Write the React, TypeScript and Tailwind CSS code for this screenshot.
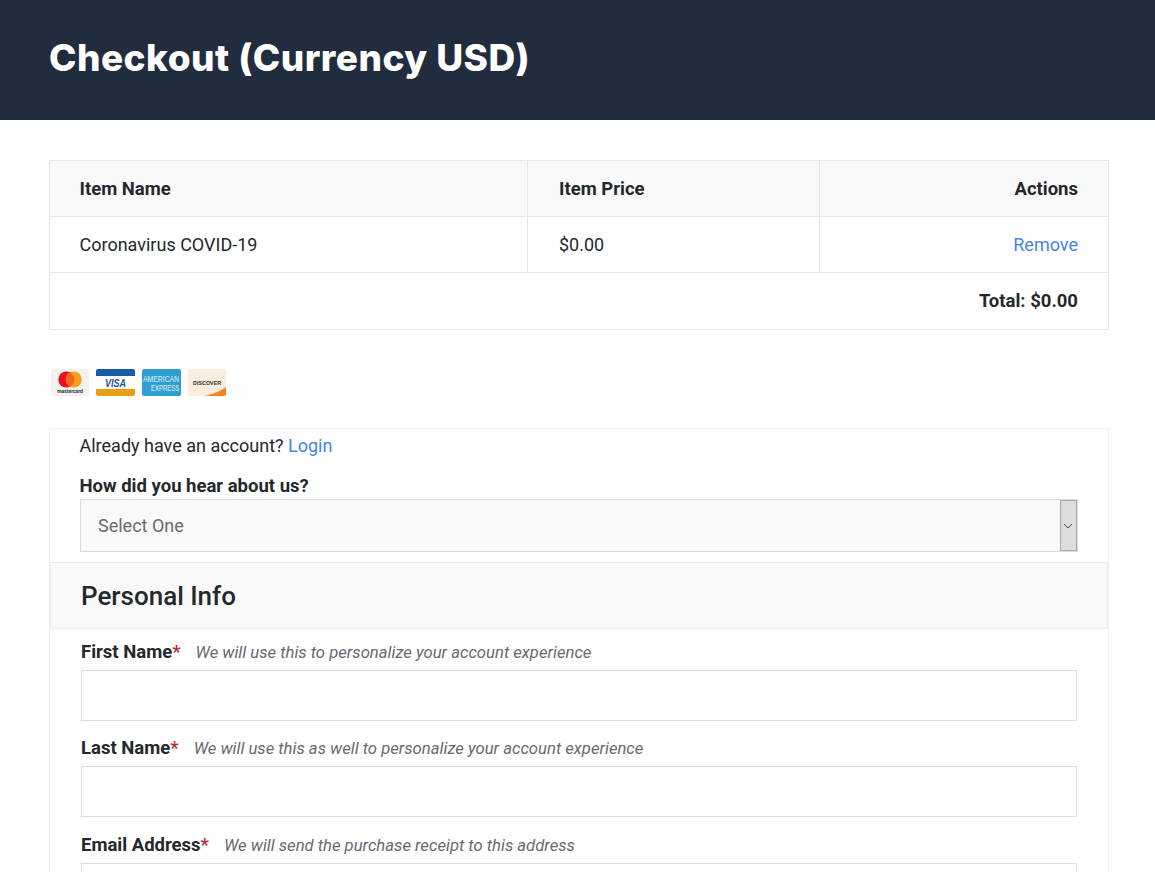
const PaymentIcons = () => (
  <div className="flex items-center gap-[7px] pl-[2px]">
    {/* Mastercard */}
    <svg width="38" height="27" viewBox="0 0 38 27">
      <rect width="38" height="27" rx="2" fill="#f3f2f1" />
      <circle cx="15.3" cy="10.5" r="8" fill="#e8111d" />
      <circle cx="22.7" cy="10.5" r="8" fill="#f79e1b" />
      <path d="M19 3.4a8 8 0 0 1 0 14.2a8 8 0 0 1 0-14.2z" fill="#f4651c" />
      <text x="19" y="23.5" textAnchor="middle" fontSize="5" fontWeight="700" fill="#333" fontFamily="Roboto, sans-serif">mastercard</text>
    </svg>
    {/* Visa */}
    <svg width="39" height="27" viewBox="0 0 39 27">
      <rect width="39" height="27" rx="2" fill="#fff" />
      <path d="M0 7V2a2 2 0 0 1 2-2h35a2 2 0 0 1 2 2v5z" fill="#1a5ca8" />
      <path d="M0 20v5a2 2 0 0 0 2 2h35a2 2 0 0 0 2-2v-5z" fill="#e79f15" />
      <text x="9" y="17.5" fontSize="11" fontWeight="700" fontStyle="italic" fill="#1c4f94" fontFamily="'Liberation Sans', sans-serif" textLength="21" lengthAdjust="spacingAndGlyphs">VISA</text>
    </svg>
    {/* American Express */}
    <svg width="39" height="27" viewBox="0 0 39 27">
      <rect width="39" height="27" rx="2" fill="#2f9fd3" />
      <text transform="translate(1 12.5) scale(0.72 1)" fontSize="9.5" fill="#e4f3fa" fontFamily="'Liberation Sans', sans-serif">AMERICAN</text>
      <text transform="translate(9 22) scale(0.63 1)" fontSize="9.5" fill="#e4f3fa" fontFamily="'Liberation Sans', sans-serif">EXPRESS</text>
    </svg>
    {/* Discover */}
    <svg width="38" height="27" viewBox="0 0 38 27">
      <rect width="38" height="27" rx="2" fill="#fbeee0" />
      <path d="M16 27C26 25 33 22 38 18v7a2 2 0 0 1-2 2z" fill="#f58220" />
      <text x="5" y="15.5" fontSize="5.4" fontWeight="700" fill="#3a2a20" fontFamily="'Liberation Sans', sans-serif">DISCOVER</text>
    </svg>
  </div>
);

const Field = ({ label, hint }: { label: string; hint: string }) => (
  <div>
    <div className="-mt-[1px] flex h-[23px] items-baseline text-[#23282d]">
      <span className="text-[18.5px] font-bold">
        {label}
        <span className="text-[#b5333f]">*</span>
      </span>
      <em className="ml-[15px] text-[16.67px] text-[#666a70]">{hint}</em>
    </div>
    <div className="mt-[8px] h-[51px] border border-[#dcdcdc] bg-white" />
  </div>
);

export default function App() {
  return (
    <div className="h-screen overflow-hidden bg-white font-['Roboto',sans-serif] text-[18px] text-[#23282d]">
      {/* Header */}
      <div className="flex h-[120px] items-center bg-[#222c3f] px-[49px]">
        <h1 className="-mt-[4px] font-['Inter',sans-serif] text-[37px] font-extrabold tracking-[0.46px] text-white">
          Checkout (Currency USD)
        </h1>
      </div>

      <div className="px-[49px] pt-[40px]">
        {/* Cart table */}
        <table className="w-[1060px] table-fixed border-collapse border border-[#e6e6e6]">
          <colgroup>
            <col className="w-[478px]" />
            <col className="w-[292px]" />
            <col />
          </colgroup>
          <tbody>
            <tr className="h-[56px] bg-[#f9f9f9] text-[18.5px] font-bold">
              <td className="border border-[#e6e6e6] pt-[2px] pl-[29.5px]">Item Name</td>
              <td className="border border-[#e6e6e6] pt-[2px] pl-[31px]">Item Price</td>
              <td className="border border-[#e6e6e6] pt-[2px] pr-[30px] text-right">Actions</td>
            </tr>
            <tr className="h-[56px]">
              <td className="border border-[#e6e6e6] pl-[29.5px]">Coronavirus COVID-19</td>
              <td className="border border-[#e6e6e6] pl-[31px]">$0.00</td>
              <td className="border border-[#e6e6e6] pr-[30px] text-right text-[#4285e4]">Remove</td>
            </tr>
            <tr className="h-[57px]">
              <td colSpan={3} className="border border-[#e6e6e6] pt-[2px] pr-[30px] text-right text-[18.5px] font-bold">
                Total: $0.00
              </td>
            </tr>
          </tbody>
        </table>

        <div className="mt-[39px]">
          <PaymentIcons />
        </div>

        {/* Checkout form */}
        <div className="mt-[32px] w-[1060px] border border-[#f0f0f0]">
          <div className="px-[29.5px]">
            <p className="h-[35px] leading-[34px]">
              Already have an account? <span className="text-[#4285e4]">Login</span>
            </p>
            <p className="h-[35px] pt-[8px] text-[18.5px] leading-[28px] font-bold">How did you hear about us?</p>
            <div className="flex h-[53px] w-[998px] border border-[#dcdcdc] bg-[#f9f9f9]">
              <span className="flex-1 pl-[17.5px] leading-[51px] text-[#666a70]">Select One</span>
              <span className="flex w-[17px] items-center justify-center border border-[#a9a9a9] bg-[#dddddd]">
                <svg width="10" height="6" viewBox="0 0 10 6" fill="none" stroke="#444" strokeWidth="1">
                  <path d="M1 1l4 4 4-4" />
                </svg>
              </span>
            </div>
          </div>

          <div className="mt-[10px] h-[67px] border border-[#ececec] bg-[#f9f9f9] pl-[30px] text-[26px] leading-[66px] font-medium">
            Personal Info
          </div>

          <div className="flex flex-col gap-[15.4px] px-[31px] pt-[11px]">
            <Field label="First Name" hint="We will use this to personalize your account experience" />
            <Field label="Last Name" hint="We will use this as well to personalize your account experience" />
            <Field label="Email Address" hint="We will send the purchase receipt to this address" />
          </div>
        </div>
      </div>
    </div>
  );
}
